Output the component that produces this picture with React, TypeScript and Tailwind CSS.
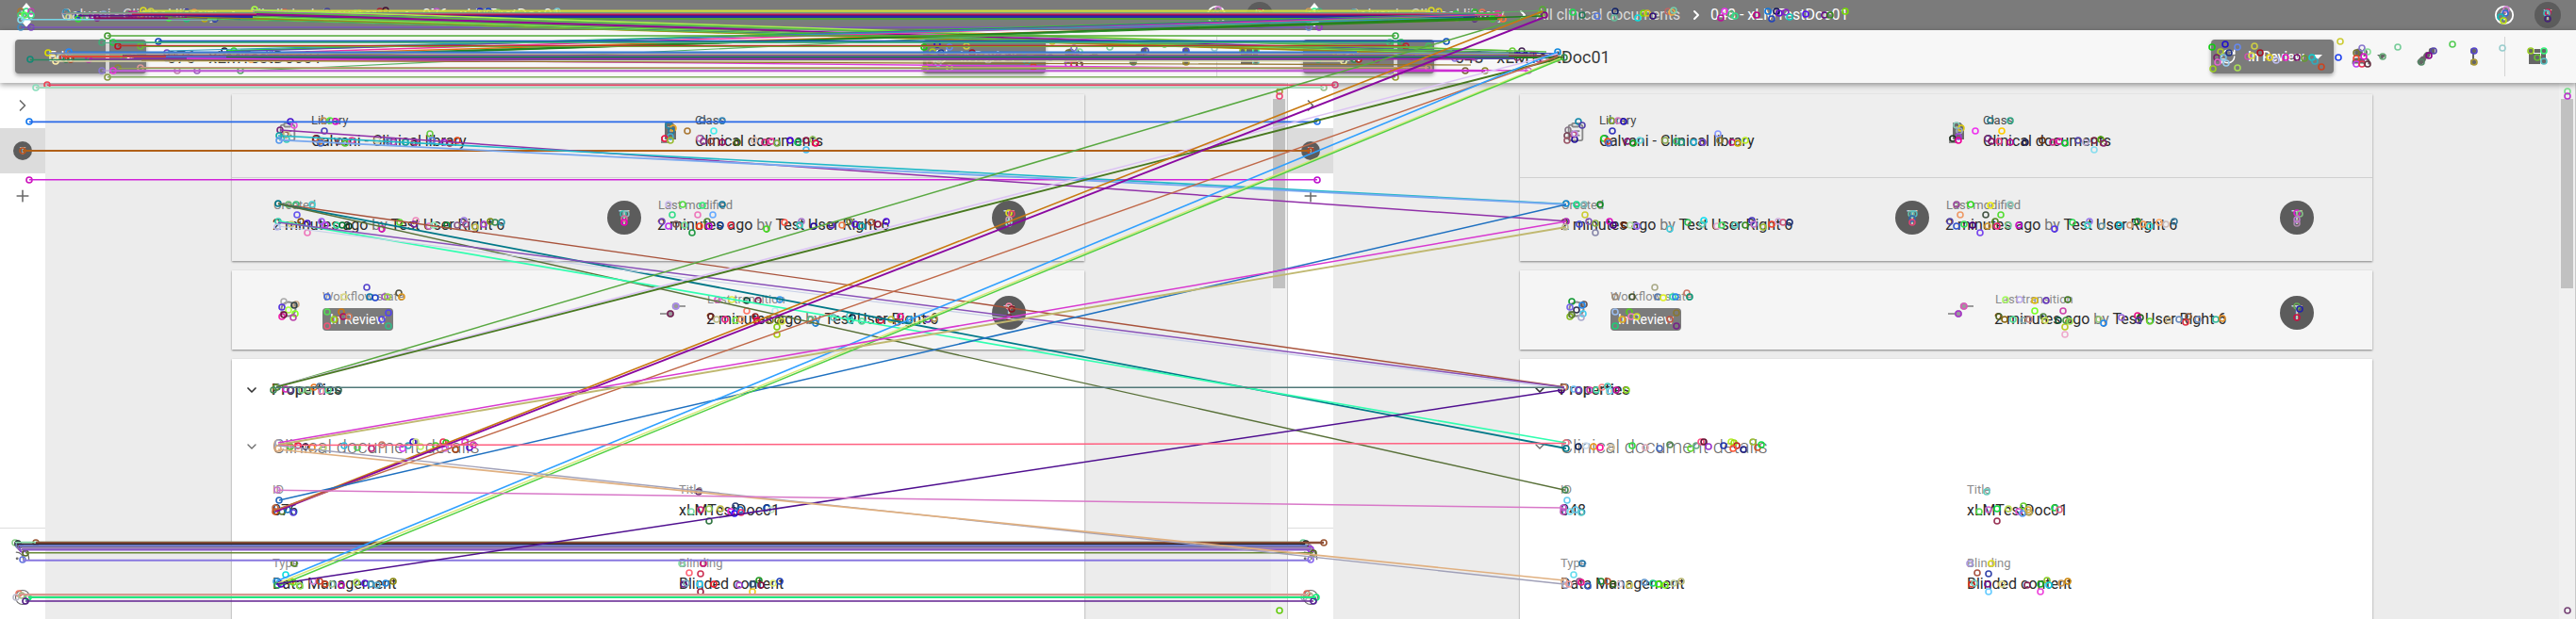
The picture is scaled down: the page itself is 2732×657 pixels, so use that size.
import React from "react";
import { ChevronDown, ChevronRight, Plus, Rss, HelpCircle, Users, ClipboardList, RefreshCw } from "lucide-react";

function Avatar({ size }: { size: "sm" | "md" | "lg" }) {
  const cls =
    size === "lg" ? "size-9 text-[20px]" : size === "md" ? "size-7 text-[15px]" : "size-5 text-[11px]";
  return (
    <div className={`${cls} flex shrink-0 items-center justify-center rounded-full bg-[#5c5c5c] leading-none text-[#cfcfcf]`}>
      T
    </div>
  );
}

function Caret() {
  return (
    <svg width="10" height="5" viewBox="0 0 10 5" fill="currentColor">
      <path d="M0 0h10L5 5z" />
    </svg>
  );
}

function RelationIcon() {
  return (
    <svg width="20" height="20" viewBox="0 0 20 20" fill="none" stroke="currentColor" strokeLinecap="round">
      <path d="M4 16L16 3.5" strokeWidth="3" />
      <path d="M4 15.5L6.5 13M10.5 9L11 8.5M16 4h.1" strokeWidth="6.5" />
    </svg>
  );
}

function CommitIcon() {
  return (
    <svg width="20" height="20" viewBox="0 0 20 20" fill="currentColor">
      <rect x="7" y="1" width="6" height="6" rx="2" />
      <rect x="9" y="7" width="2" height="6" />
      <rect x="7" y="13" width="6" height="6" rx="2" />
    </svg>
  );
}

function LayoutIcon() {
  return (
    <svg width="20" height="20" viewBox="0 0 20 20" fill="currentColor">
      <path d="M1 2h5v4H1zM7 2h6v4H7zM14 2h5v4h-5zM1 7h12v11H1zM14 7h5v5h-5zM14 13h5v5h-5z" />
    </svg>
  );
}

function DocIcon() {
  return (
    <svg width="18" height="24" viewBox="0 0 18 24" fill="#6c6c6c">
      <path d="M5 1h7l4 4v14H5a1 1 0 0 1-1-1V2a1 1 0 0 1 1-1z" />
      <path d="M1 16v6h8" fill="none" stroke="#8a8a8a" strokeWidth="2" />
      <path d="M7 6h5M7 10h6" stroke="#cfcfcf" strokeWidth="1.2" />
    </svg>
  );
}

function TransitionIcon() {
  return (
    <svg width="28" height="20" viewBox="0 0 28 20" fill="#9a9a9a">
      <rect x="17" y="5" width="10" height="2" />
      <circle cx="16.5" cy="6" r="3.8" />
      <rect x="0" y="13" width="9" height="2" />
      <circle cx="11" cy="14" r="3.8" />
    </svg>
  );
}

function TopBar({ id }: { id: string }) {
  return (
    <header className="flex h-8 shrink-0 items-center bg-[#7b7b7b] pl-[20px] text-[16px] text-white">
      <svg width="16" height="26" viewBox="0 0 16 26" fill="#fff">
        <path d="M8 0l5 6-5 6-5-6zM8 14l5 6-5 6-5-6zM3 8l4 5-4 5-3-5zM13 8l3 5-3 5-4-5z" />
      </svg>
      <span className="ml-[29px] w-[172px] whitespace-nowrap text-[#dcdcdc]">Galvani - Clinical library</span>
      <ChevronRight className="ml-[4px] size-4" strokeWidth={3} />
      <span className="ml-[6px] w-[162px] whitespace-nowrap text-[15.7px] text-[#dcdcdc]">All clinical documents</span>
      <ChevronRight className="size-4" strokeWidth={3} />
      <span className="ml-[7px] whitespace-nowrap">{id} - xLMTestDoc01</span>
      <div className="ml-auto flex items-center gap-[21px] pr-[16px]">
        <HelpCircle className="size-[22px]" />
        <Avatar size="md" />
      </div>
    </header>
  );
}

function ToolBar({ id }: { id: string }) {
  return (
    <div className="z-10 flex h-14 shrink-0 items-center bg-[#f7f7f7] pl-4 text-[#666] shadow-[0_2px_6px_rgba(0,0,0,0.4)]">
      <div className="flex h-9 gap-1 text-[15px] text-white">
        <div className="flex w-24 items-center justify-center rounded-l bg-[#7b7b7b] shadow-[0_2px_4px_rgba(0,0,0,0.35)]">Edit</div>
        <div className="flex w-[39px] items-center justify-center rounded-r bg-[#7b7b7b] shadow-[0_2px_4px_rgba(0,0,0,0.35)]">
          <Caret />
        </div>
      </div>
      <h1 className="ml-[22px] text-[18px] text-[#3a3a3a]">{id} - xLMTestDoc01</h1>
      <div className="ml-auto flex items-center">
        <div className="flex h-9 w-[130px] items-center rounded-sm bg-[#7b7b7b] pl-[9px] text-[14px] font-medium text-white shadow-[0_2px_4px_rgba(0,0,0,0.35)]">
          <RefreshCw className="size-[18px]" />
          <span className="ml-[12px] mr-auto">In Review</span>
          <span className="mr-[12px]"><Caret /></span>
        </div>
        <Users className="ml-[19px] size-[20px]" fill="currentColor" strokeWidth={2.5} />
        <span className="ml-[7px]"><Caret /></span>
        <span className="ml-[32px]"><RelationIcon /></span>
        <span className="ml-[30px]"><CommitIcon /></span>
        <div className="ml-[23px] h-[42px] w-px bg-[#d4d4d4]" />
        <span className="ml-[24px] mr-[31px]"><LayoutIcon /></span>
      </div>
    </div>
  );
}

function SideBar() {
  return (
    <nav className="flex w-12 shrink-0 flex-col bg-white text-[#6a6a6a] shadow-[1px_0_3px_rgba(0,0,0,0.3)]">
      <div className="flex h-12 items-center justify-center"><ChevronRight className="size-5" /></div>
      <div className="flex h-12 items-center justify-center bg-[#dcdcdc]"><Avatar size="sm" /></div>
      <div className="flex h-12 items-center justify-center"><Plus className="size-5" strokeWidth={1.9} /></div>
      <div className="mt-auto flex h-[97px] flex-col items-center gap-[28px] border-t border-[#ddd] pt-[16px]">
        <Rss className="size-5" strokeWidth={1.5} />
        <HelpCircle className="size-[18px]" strokeWidth={1.5} />
      </div>
    </nav>
  );
}

function Field({ label, value, dim }: { label: string; value: string; dim?: boolean }) {
  return (
    <div className="whitespace-nowrap">
      <div className={dim ? "text-[13px] leading-[20px] text-[#8c8c8c]" : "text-[13px] leading-[20px] text-[#4a4a4a]"}>{label}</div>
      <div className="pt-px text-[16px] leading-[22px] text-[#2a2a2a]">{value}</div>
    </div>
  );
}

function Stamp() {
  return (
    <div className="-ml-px text-[16px] leading-[22px] text-[#2a2a2a]">
      2 minutes ago <span className="text-[#777]">by</span> Test User Right 6
    </div>
  );
}

const cardShadow = "w-[904px] shrink-0 shadow-[0_1px_2px_rgba(0,0,0,0.45)]";

function Cards({ id }: { id: string }) {
  return (
    <main className="flex h-[569px] grow flex-col gap-[10px] overflow-hidden bg-[#ececec] pl-[198px] pt-[12px]">
      <section className={`${cardShadow} flex h-[177px] flex-col bg-[#eee]`}>
        <div className="flex h-[89px] border-b border-[#d0d0d0] pl-[48px] pt-[18px]">
          <ClipboardList className="mr-[14px] mt-[11px] size-[22px] text-[#888]" />
          <div className="w-[371px]"><Field label="Library" value="Galvani - Clinical library" /></div>
          <div className="mr-[18px] mt-[11px]"><DocIcon /></div>
          <Field label="Class" value="Clinical documents" />
        </div>
        <div className="flex h-[88px] pl-[44px] pt-[19px]">
          <div className="w-[354px] whitespace-nowrap">
            <div className="text-[13px] leading-[20px] text-[#808080]">Created</div>
            <Stamp />
          </div>
          <div className="mt-[5px]"><Avatar size="lg" /></div>
          <div className="ml-[18px] w-[354px] whitespace-nowrap">
            <div className="text-[13px] leading-[20px] text-[#808080]">Last modified</div>
            <Stamp />
          </div>
          <div className="mt-[5px]"><Avatar size="lg" /></div>
        </div>
      </section>
      <section className={`${cardShadow} flex h-[84px] bg-[#f5f5f5]`}>
        <RefreshCw className="ml-[50px] mt-[31px] size-[20px] text-[#8a8a8a]" strokeWidth={2.5} />
        <div className="ml-[26px] mt-[18px] w-[358px]">
          <div className="text-[13px] leading-[20px] text-[#8c8c8c]">Workflow state</div>
          <div className="mt-[2px] flex h-6 w-[75px] items-center justify-center rounded-sm bg-[#7b7b7b] text-[14px] text-white">In Review</div>
        </div>
        <div className="mt-[32px]"><TransitionIcon /></div>
        <div className="ml-[22px] mt-[21px] w-[302px] whitespace-nowrap">
          <div className="text-[13px] leading-[20px] text-[#8c8c8c]">Last transition</div>
          <Stamp />
        </div>
        <div className="mt-[27px]"><Avatar size="lg" /></div>
      </section>
      <section className={`${cardShadow} flex h-[300px] flex-col bg-white`}>
        <div className="mt-[21px] flex h-6 items-center pl-[13px] text-[16px] font-medium text-[#333]">
          <ChevronDown className="mr-[13px] size-4" strokeWidth={2.5} />
          Properties
        </div>
        <div className="mt-[36px] flex h-6 items-center pl-[13px] text-[20px] font-light text-[#6c6c6c]">
          <ChevronDown className="mr-[14px] size-4" />
          Clinical document details
        </div>
        <div className="mt-[24px] grid grid-cols-[431px_1fr] gap-y-[35px] pl-[43px]">
          <Field dim label="ID" value={id} />
          <Field dim label="Title" value="xLMTestDoc01" />
          <Field dim label="Type" value="Data Management" />
          <Field dim label="Blinding" value="Blinded content" />
        </div>
      </section>
    </main>
  );
}

function Pane({ id }: { id: string }) {
  return (
    <div className="flex h-[657px] w-[1366px] flex-col overflow-hidden">
      <TopBar id={id} />
      <ToolBar id={id} />
      <div className="flex h-[569px]">
        <SideBar />
        <Cards id={id} />
        <div className="flex w-[18px] shrink-0 flex-col items-center border-r border-[#c8c8c8] bg-[#f0f0f0] pt-[17px]">
          <div className="h-[201px] w-[13px] bg-[#c1c1c1]" />
        </div>
      </div>
    </div>
  );
}

// [x1, y1, x2, y2, colour, width]
type Edge = [number, number, number, number, string, number?];

const edges: Edge[] = [
  [151, 11.7, 1517, 11.7, "#d0dc40", 2], [70, 13.6, 1586, 13.6, "#6f9a80"], [65, 14.6, 1590, 14.6, "#a090a0"],
  [140, 15.4, 1588, 15.4, "#c81848", 1.5], [83, 16.6, 1570, 16.6, "#5a1080", 1.4], [198, 18, 1564, 18, "#2828a8", 1.8],
  [178, 20, 1544, 20, "#56a038", 1.6], [22, 20.8, 230, 20.8, "#78d8e8", 1.4], [100, 19.4, 220, 19.4, "#880858", 2],
  [220, 22, 1590, 22, "#708878"], [22, 29, 1388, 29, "#7050b8", 1.3], [33, 28.5, 1399, 28.5, "#8060b0"],
  [268, 10.5, 1604, 54, "#a8ec50", 1.5], [268, 12, 1614, 57, "#b060d0"], [272, 15, 1627, 58, "#900890", 1.8],
  [268, 18, 1616, 59, "#78e848", 1.5], [268, 20, 1610, 60, "#b0a000", 1.5], [270, 13, 1640, 55, "#58b848", 1.4],
  [230, 20, 1652, 57, "#1828b0"], [198, 18, 1658, 61, "#988020"], [178, 19, 1606, 56, "#58c050"], [272, 17, 1652, 59, "#60a050"],
  [240, 54, 1592, 14, "#20e020", 1.3], [248, 54, 1588, 16, "#30b050"], [260, 57, 1590, 15, "#f030a0", 1.3],
  [285, 58, 1594, 20, "#e07018", 1.4], [292, 60, 1588, 20, "#288818", 1.8], [255, 75.5, 1636, 11, "#58b060"],
  [236, 55, 1564, 15, "#6048b0"], [178, 54, 1552, 19, "#3098b8"], [292, 61, 1636, 17, "#228020", 1.5],
  [114, 38, 1480, 38, "#50a838", 1.2], [168, 43.6, 1534, 43.6, "#1c50b8", 1.4], [120, 45, 1486, 45, "#28b060", 1.4],
  [108, 45.5, 1474, 45.5, "#50a888"], [125, 48.5, 1491, 48.5, "#b83828", 1.3], [150, 49.5, 1516, 49.5, "#70a838"],
  [73, 55.5, 1439, 55.5, "#2878d8", 1.6], [51, 56.5, 1600, 56.5, "#7088c0", 1.5], [60, 58, 1626, 58, "#a0a888", 1.5],
  [66, 60, 1432, 60, "#e04838", 2], [130, 59, 1652, 59, "#803060", 1.5], [176, 60, 1600, 60, "#5868c0", 1.6],
  [240, 61, 1656, 61, "#207820", 2], [142, 62, 1606, 62, "#5048a0", 1.6], [32, 63.4, 1440, 63.4, "#288860", 1.3],
  [94, 62.8, 1564, 62.8, "#a028a0", 1.4], [59, 65, 1425, 65, "#e0d8a8", 1.2], [198, 62, 1621, 75, "#e038e0", 1.2],
  [150, 64, 1560, 69, "#907028"],
  [149, 71.8, 1515, 71.8, "#c89880", 1.2], [125, 72.7, 1491, 72.7, "#90a058"], [120, 75.3, 1575, 75.3, "#c828d0", 1.8],
  [108, 75, 1474, 75, "#b090d8"], [114, 81.8, 1480, 81.8, "#80a860", 1.4], [50, 90.2, 1416, 90.2, "#e84060", 1.4],
  [38, 93, 1404, 93, "#a8dcc0", 2], [31, 129.3, 1397, 129.3, "#2868e8", 1.5], [24, 160, 1390, 160, "#b06018", 1.8],
  [31, 190.7, 1397, 190.7, "#d020d8", 1.4],
  [16, 575.6, 1382, 575.6, "#80d8a0", 1.4], [38, 576, 1404, 576, "#8c5038", 2.2], [18, 577.7, 1384, 577.7, "#282028", 1.5],
  [20, 579.2, 1386, 579.2, "#6878d8", 1.5], [21, 580.6, 1387, 580.6, "#787098", 1.4], [23, 582, 1389, 582, "#a088b8", 1.6],
  [24, 583.6, 1390, 583.6, "#8858c8", 1.8], [27, 586.7, 1393, 586.7, "#688838", 1.2], [24, 594.7, 1390, 594.7, "#8878e0", 1.8],
  [20, 631, 1386, 631, "#d89890", 1.8], [26, 633, 1392, 633, "#b8b090"], [30, 634, 1396, 634, "#20e880", 1.8], [27, 638, 1393, 638, "#602090", 1.2],
  [297, 138, 1661, 234.7, "#9030a8", 1.3], [295, 144, 1661, 216.5, "#20b8c8", 1.4], [296, 148.7, 1661, 217, "#78a8f0", 1.6],
  [295, 216.3, 1659, 410.7, "#a8523a", 1.2], [295, 216.3, 1661, 476, "#007888", 1.6], [295, 216.3, 1660, 520.3, "#587038", 1.2],
  [295, 234.7, 1661, 470, "#30ffb0", 1.5], [295, 236, 1659, 411, "#8850b8", 1.3], [295, 240, 1659, 413, "#c8d0e8"],
  [293, 410.7, 1636, 13, "#58a840", 1.3], [293, 410, 1652, 57, "#dcc4f4", 1.4], [293, 410.7, 1658, 61, "#487820", 1.7],
  [293, 411.2, 1656, 411.2, "#507878", 1.3],
  [292, 542, 1636, 12, "#c87810", 1.4], [292, 543, 1636, 19, "#8a08a0", 1.7], [293, 541, 1652, 60, "#c06848", 1.2],
  [296, 531, 1661, 217, "#1e70c0", 1.3], [293, 617, 1652, 55, "#30a0ff", 1.4], [295, 619, 1655, 62, "#d8e878", 1.2], [297, 621, 1658, 62, "#50d040", 1.3],
  [293, 620, 1656, 414, "#501090", 1.3], [295, 470, 1661, 235, "#d838d0", 1.3], [295, 472, 1661, 241, "#c0b870", 1.7],
  [295, 472.5, 1661, 470.5, "#ff6080", 1.3], [295, 473, 1659, 620, "#a0a0b8", 1.2], [295, 477, 1659, 616, "#e0b080", 1.5],
  [294, 520.3, 1658, 539, "#d878c8", 1.3],
];

// x, y, colour in the left pane, colour in the right pane
const nodes = `
22,12,a73,c95;28,12,3d8,3e8;33,12,b4a,4a8;22,16,4c7,8c8;26,16,5f5,6d6;33,16,4d8,5c7;22,21,8de,8de;22,29,48b,68c;33,29,74b,93c
70,13,38a,38a;73,18,cd8,9ad;83,16,13b,13c;83,20,3d3,2d4;92,18,4c6,4b5;98,17,929,847;103,19,808,818;110,15,8ac,7bd;139,15,a27,b38;143,15,c39,c39;149,16,db3,ec2;152,11,dd2,dd2;160,12,cc4,dc2;167,17,479,589;178,15,4b4,3c4;179,19,3f1,7e2;198,13,11c,3b3;198,20,2b7,518;200,17,a28,b28;206,13,e85,e75;209,16,618,728;222,15,e13,f2a;217,20,ba1,3d2;228,20,12c,f73;223,15,fcc,e39
268,15,d66,8b3;270,10,af4,5a3;272,16,918,808
114,38,493,3a4;108,45,4a7,4c7;120,45,2c4,2b5;125,49,b12,b23;149,49,6b3,4b6;168,44,14b,15b;51,56,dd0,ce1;73,55,28f,28e;32,63,187,396;56,61,ed8,bca;59,65,fea,eea;67,61,d33,e43;70,63,274,385;75,63,a31,b21;94,63,a2a,938;131,60,3d5,938;142,60,a9d,c9c;125,72,883,985;149,72,d99,c98;108,75,87c,97b;120,75,e3d,d4c;114,82,894,993;50,90,e45,c47;38,93,8db,9b8
177,56,74b,75c;185,59,68c,57a;177,62,36d,87d;198,61,c6c,a6a;188,75,b8a,763;209,75,96b,882;233,60,dde,8b5;238,54,224,6c3;248,54,3d2,425;243,61,582,837;260,58,f39,d35;266,63,f82,b48;272,62,4d6,c9c;280,61,695,b56;286,55,b4c,18d;286,62,823,ca8;293,61,182,384;255,75,5a6,c7c
302,13,d55,2d5;312,16,555,275;328,17,a6b,57d;347,12,449,126;346,19,9c8,6b9;371,19,3cb,1dd;377,14,6c8,7d0;381,14,bc2,db2;387,17,218,317;403,12,a23,b66;407,13,a61,ea4;409,11,413,7ca;463,12,b5c,e3e;459,19,d4c,b19;470,15,7b5,5b7;474,17,5c5,3d8;497,16,a05,b08;509,12,22c,17d;513,20,38b,24b;518,12,14c,115;521,14,11c,61c;528,13,7c7,82c;532,18,3cb,1cb;549,15,2bb,51e;569,16,714,618;575,16,472,382;591,12,7cd,7d0
31,129,17e,27e;24,160,b52,b42;31,191,c1b,b1c
308,129,41c,18a;312,133,e5d,54a;297,138,727,878;303,143,955,b47;296,144,1aa,745;296,149,59e,956;304,148,3cb,219;304,142,cc8,b8d;343,128,c95,8a3;350,128,5e4,c7b;356,129,d1c,21b;344,139,44b,33b;456,142,6c4,89f;335,147,823,2d3;339,150,c73,e42;340,152,36c,46c;360,150,735,817;366,152,5c3,1a2;373,149,e49,6dd;400,149,cca,8a5;412,150,58c,3b6;417,151,b4b,297;430,151,1a9,2ac;440,151,b38,74c;458,149,58e,873;471,151,a1c,b17;477,152,913,ca0;485,149,d41,be2
709,133,28a,8cb;714,136,ea2,dc1;712,139,279,9ab;711,145,4ac,94d;705,147,e14,232;711,149,9b3,e09;729,139,a73,e3e;757,139,4ee,fc0;766,128,38b,3a8;745,128,468,278;742,147,c7b,738;746,150,838,816;754,150,943,e48;766,151,916,b19;782,151,461,225;800,149,dba,631;811,151,c27,c28;818,150,e39,d19;824,152,7a4,1c3;838,149,40d,54a;846,151,1b5,bac;855,149,814,724;862,148,9c6,5a1;865,152,e05,826;855,159,4be,8de
1357,97,a93,7d8;1357,102,e47,b3c
295,216,078,18c;306,217,6b7,1d8;314,217,3b7,7bb;331,217,4cc,182;295,235,3ca,a2a;294,241,bbe,bb9;315,228,65e,cc3;309,238,cc7,44c;319,235,851,85b;326,237,41c,8a4;326,247,e7b,88a;341,235,95e,d1b;345,239,b4e,408;357,239,3d9,620;363,239,073,ada;370,240,142,96e;405,243,d1b,4cd;424,236,6d3,3b5;441,234,e8b,1de;439,238,729,6ca;455,240,d7c,eac;460,239,8eb,4d6;474,239,183,5cb;485,239,858,382;492,234,97d,43b;494,238,a58,b7c;504,241,bb4,9b3;513,238,a4c,e43;520,235,781,cad;525,236,385,c57;532,236,39a,237;661,227,3ba,6ba;664,227,8bb,5bb;662,232,d69,36a;662,236,e0b,d47
709,217,cbe,949;724,217,5d4,3d2;745,218,3e7,ee1;766,217,179,8cb;713,228,3d8,e96;740,228,e7b,454;756,228,6af,5d3;702,235,74b,54a;709,240,b3e,35c;717,238,755,3d5;726,239,7d9,407;734,247,294,74e;742,240,f42,c93;750,235,583,582;752,240,b0c,e27;764,239,149,7c9;775,239,e34,c1c;813,243,4d2,53e;832,236,f54,3d5;850,235,a7c,97e;848,239,3cb,4dc;863,240,209,69a;882,239,52b,1bc;893,239,e74,c97;901,235,783,182;907,238,51c,e95;914,240,1aa,3dc;924,236,a53,fa6;931,238,814,cbb;940,235,51d,379;1070,226,dd2,d2c;1073,227,d46,8b8;1070,237,8ec,a8a;1070,233,c9a,b7c
389,305,54c,aa8;347,315,46d,987;365,315,dd8,453;392,315,17a,57a;398,316,24c,de2;408,315,95b,3da;411,315,9c4,28e;423,311,554,c76;426,315,d92,197
301,320,aaa,193;314,323,ca8,655;299,326,53d,76e;312,324,344,28e;306,329,af4,335;313,333,8f2,4ce;299,336,e2a,8b2;311,337,b4a,aac;301,334,714,573
347,331,5d5,9be;362,331,c71,5c2;355,339,c62,e63;354,339,8d3,cb3;364,336,a16,e7b;370,336,c75,cd2;405,339,54e,b54;412,332,54e,873;347,346,e57,2c7;412,346,3b8,728
761,318,e5d,af6;776,318,de4,bae;792,319,143,db1;804,319,825,63b;827,318,39e,472;717,325,a8e,d5b;711,333,725,a3c;792,330,f76,7f2;822,330,bee,c4a;754,336,622,562;760,339,bb8,861;769,339,e28,5d9;780,340,7e4,8aa;786,339,e96,b88;801,336,922,584;803,340,e05,cd5;817,340,882,153;824,347,8c1,bc2;825,340,462,494;829,341,cd3,9d5;824,355,ac1,eac;860,339,5b8,9c7;865,343,28d,28e;884,337,6bb,96d;901,335,5cc,e18;904,337,124,262;902,340,3cb,539;914,341,5d9,6d3;934,340,d24,cb8;945,339,bb3,68b;955,336,e18,853;952,342,a53,d34;965,339,3ad,79c;984,339,62b,3b9;991,338,a84,d82;1070,325,f8a,6a5;1073,328,812,22a;1070,337,722,c14
293,411,693,c86;290,414,485,407;303,413,d2b,6be;308,414,648,74b;320,414,7c7,c3a;327,414,8c8,4da;333,411,e72,f88;339,410,579,4cb;341,415,e8b,7de;348,414,5d9,b19;359,414,365,8d2
295,470,aab,e78;295,476,da7,078;308,474,5c2,125;316,473,e14,cde;324,474,213,e92;331,475,e81,f19;343,475,bd7,cb9;365,473,3bd,3d4;379,475,5c5,dab;394,476,b27,46b;405,472,c76,585;427,476,d4f,6d3;433,473,3ab,6a8;438,469,31c,f58;441,469,cd8,613;446,474,be6,93c;462,473,4c2,23a;470,469,e35,be3;473,470,3b2,9d1;476,473,c3c,b22;472,476,d7e,f53;483,477,a41,228;493,469,e3e,9b3;498,475,51c,c52;502,472,d3b,1d4
294,520,c7c,485;292,539,b64,b5c;292,543,c52,b5b;299,543,573,7de;305,541,17b,6ce;311,544,54d,5cc;296,531,26b,6ce
312,598,582,27a;303,610,1dd,6de;293,617,39d,da8;294,621,3a5,aac;298,620,50c,e99;309,617,da0,858;311,618,6d3,e18;318,622,8d4,35b;332,617,d8d,283;339,617,c43,b53;345,620,c42,362;352,620,9c9,dcd;362,621,b1b,cc6;378,618,ad5,69c;387,619,51c,2c8;393,620,49b,4e0;400,621,5ac,7e2;409,619,28d,bc9;417,617,881,bb7
741,522,636,6cb;733,543,7da,5d5;743,541,c27,c6c;752,540,9c5,1d4;764,540,bb4,bd5;752,553,374,935;775,543,e2d,d5c;780,537,347,6c3;779,545,21f,59e;785,541,16b,da3;786,544,e37,ba5;813,539,14a,2d4;818,541,bdb,d68
723,598,8da,a9d;746,598,c17,dd2;731,608,f67,a54;743,609,c35,34a;725,620,628,d32;728,619,7ab,7cb;742,620,3ce,718;757,620,e23,dd8;743,628,924,6cf;784,621,a4c,825;798,620,357,2a2;805,616,292,8c2;807,621,814,1cd;798,628,ec2,e4d;820,619,de7,c95;827,617,24b,c81;1357,648,6c1,747
16,576,8c8,6c9;19,577,112,222;20,579,78b,88b;22,581,86a,98a;24,583,84c,93d;27,587,562,562;24,594,67d,86e;38,576,953,953;20,630,e76,d65;17,634,bbc,aab;23,632,ab8,bb9;30,634,1e7,1e7;27,638,528,529`
  .trim()
  .split(/[;\n]/)
  .map((n) => n.trim().split(","));

// nodes over the right-hand end of each pane's bars
const toolbarNodes = `980,50,1c1;994,47,21c;1007,50,68e;1025,49,cc4;989,55,ac2;998,56,238;985,61,726;992,61,7bd;986,66,d6c;995,67,9ce;1018,60,c5a;1022,59,dd4;1031,56,a12;1041,61,dc1;1048,64,bbe;1058,61,d1b;1070,61,716;1078,62,693;1086,61,1cc;1089,65,3ab;1096,71,c42;981,73,9c2;1007,72,ad5;1116,44,cc3;1114,61,24e;1133,56,773;1139,51,87c;1145,55,8d9;1133,62,e43;1141,60,d1c;1133,68,b4e;1139,68,e35;1145,68,634;1161,60,6a7;1177,50,7c9;1215,54,54a;1210,59,808;1202,66,586;1235,47,5c5;1258,54,54c;1258,66,a93;1288,51,9cc;1318,54,9c2;1332,54,3e7;1325,61,6b3;1332,65,5bb;1292,10,c7c;1291,14,36c;1286,18,1bb;1289,22,bd1;1336,13,d15;1335,14,4bb;1336,20,427`
  .split(";")
  .map((n) => n.split(","));

function MatchOverlay() {
  return (
    <svg className="pointer-events-none absolute inset-0 z-20" width="2732" height="657" viewBox="0 0 2732 657" fill="none">
      <g strokeWidth="1.6">
        {nodes.map(([x, y, l, r], i) => (
          <React.Fragment key={i}>
            <circle cx={+x} cy={+y} r="3" stroke={`#${l}`} />
            <circle cx={+x + 1366} cy={+y} r="3" stroke={`#${r}`} />
          </React.Fragment>
        ))}
        {toolbarNodes.map(([x, y, c], i) => (
          <React.Fragment key={i}>
            <circle cx={+x} cy={+y} r="3" stroke={`#${c}`} />
            <circle cx={+x + 1366} cy={+y} r="3" stroke={`#${c}`} />
          </React.Fragment>
        ))}
      </g>
      {edges.map(([x1, y1, x2, y2, color, width], i) => (
        <line key={i} x1={x1} y1={y1} x2={x2} y2={y2} stroke={color} strokeWidth={(width ?? 1) + 0.2} />
      ))}
    </svg>
  );
}

export default function App() {
  return (
    <div className="relative flex h-[657px] w-[2732px] overflow-hidden bg-white font-['Roboto',sans-serif]">
      <Pane id="076" />
      <Pane id="048" />
      <MatchOverlay />
    </div>
  );
}
